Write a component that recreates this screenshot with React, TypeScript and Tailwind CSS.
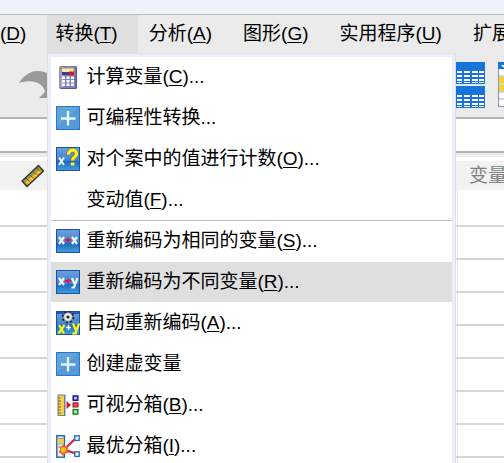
import { useState, type ReactNode } from 'react';

type Item = {
  label: string;
  mnemonic?: string;
  dots?: boolean;
  icon?: ReactNode;
};

function CalculatorIcon() {
  return (
    <svg width="24" height="24" viewBox="0 0 24 24">
      <rect x="3.5" y="1" width="17.5" height="23" rx="1.5" fill="#5c5a94" />
      <rect x="3.5" y="1" width="16" height="22" rx="1.5" fill="#8280bb" />
      <rect x="4.5" y="2" width="3" height="20" fill="#aaa8d4" />
      <rect x="5.5" y="3" width="12.5" height="5" fill="#fae9b4" stroke="#b98a3c" strokeWidth="0.8" />
      <rect x="6" y="7" width="7" height="3" fill="#3b3a8c" />
      <rect x="13" y="6.5" width="5" height="4" fill="#c81f2c" />
      <g fill="#fff">
        <rect x="6" y="11.5" width="3" height="2.5" />
        <rect x="10.5" y="11.5" width="3" height="2.5" />
        <rect x="15" y="11.5" width="3" height="2.5" />
        <rect x="6" y="15" width="3" height="2.5" />
        <rect x="10.5" y="15" width="3" height="2.5" />
        <rect x="15" y="15" width="3" height="2.5" />
        <rect x="6" y="18.5" width="3" height="2.5" />
        <rect x="10.5" y="18.5" width="3" height="2.5" />
        <rect x="15" y="18.5" width="3" height="2.5" />
      </g>
    </svg>
  );
}

function PlusIcon() {
  return (
    <svg width="24" height="24" viewBox="0 0 24 24">
      <rect x="0.5" y="0.5" width="23" height="23" fill="#559ad6" stroke="#2a78c8" />
      <path d="M1 1H23L1 20Z" fill="#6fabde" opacity="0.5" />
      <path d="M12 5V19.5M5 12.5H19.5" stroke="#e4f7ff" strokeWidth="2.4" />
    </svg>
  );
}

function BlueTile({ children }: { children: ReactNode }) {
  return (
    <svg width="24" height="24" viewBox="0 0 24 24">
      <defs>
        <linearGradient id="tile" x1="0" y1="0" x2="0" y2="1">
          <stop offset="0" stopColor="#6aa0dc" />
          <stop offset="0.55" stopColor="#4386cf" />
          <stop offset="0.6" stopColor="#1f68bd" />
          <stop offset="1" stopColor="#3fa0dd" />
        </linearGradient>
      </defs>
      <rect x="0.5" y="0.5" width="23" height="23" fill="url(#tile)" stroke="#1b51a8" />
      {children}
    </svg>
  );
}

function CountIcon() {
  return (
    <BlueTile>
      <path d="M3 10.5L8 18M8 10.5L3 18" stroke="#e9f2fa" strokeWidth="2" />
      <path d="M12.5 7.5C12.5 1.5 21 2 20.5 7C20.3 10 16.5 10 16.5 13.5" stroke="#7c7a10" strokeWidth="4.4" fill="none" />
      <path d="M12.5 7.5C12.5 1.5 21 2 20.5 7C20.3 10 16.5 10 16.5 13.5" stroke="#fff22c" strokeWidth="3.2" fill="none" />
      <rect x="14.8" y="15.5" width="3.6" height="3" fill="#fff22c" />
    </BlueTile>
  );
}

function RecodeSameIcon() {
  return (
    <BlueTile>
      <path d="M3 8L8 15M8 8L3 15M16 8L21 15M21 8L16 15" stroke="#f0f6fb" strokeWidth="2.2" />
      <path d="M9 11H14" stroke="#d81e3a" strokeWidth="2" />
      <path d="M11.5 8L15.5 11L11.5 14Z" fill="#d81e3a" />
    </BlueTile>
  );
}

function RecodeDifferentIcon() {
  return (
    <BlueTile>
      <path d="M3 8L8 15M8 8L3 15M16 8L18.5 14M21.5 8L18 17.5H15.5" stroke="#f0f6fb" strokeWidth="2.2" fill="none" />
      <path d="M9 11H14" stroke="#d81e3a" strokeWidth="2" />
      <path d="M11.5 8L15.5 11L11.5 14Z" fill="#d81e3a" />
    </BlueTile>
  );
}

function AutoRecodeIcon() {
  return (
    <BlueTile>
      <rect x="1" y="1" width="22" height="2" fill="#2458b4" />
      <circle cx="12" cy="6" r="5" fill="none" stroke="#222" strokeWidth="2.4" strokeDasharray="2 1.9" />
      <circle cx="12" cy="6" r="4.2" fill="#ececec" stroke="#999" strokeWidth="0.8" />
      <circle cx="12" cy="6" r="1.6" fill="#222" />
      <path d="M3 14L8 22.5M8.5 14L2.5 22.5" stroke="#f6f51c" strokeWidth="2.4" />
      <path d="M17 12.5L19.8 19M23 12.5L19.5 22.5H16.5" stroke="#f6f51c" strokeWidth="2.4" fill="none" />
      <path d="M10 16.5H15M12.5 14V19" stroke="#fff" strokeWidth="1.6" />
    </BlueTile>
  );
}

function VisualBinIcon() {
  return (
    <svg width="24" height="24" viewBox="0 0 24 24">
      <rect x="1.5" y="1.5" width="8" height="21.5" fill="#6f7c9c" />
      <rect x="2.5" y="2.5" width="5.5" height="19.5" fill="#f4cf4c" />
      <path d="M2 5H4.5M2 8H5M2 11H4.5M2 14H5M2 17H4.5M2 20H5" stroke="#6c6433" />
      <path d="M10.5 8L15 12L10.5 16Z" fill="#bd2335" />
      <rect x="17.2" y="3" width="4.6" height="4.2" fill="#b9c1e8" stroke="#16189a" strokeWidth="1.5" />
      <rect x="17.2" y="10" width="4.6" height="3.8" fill="#df5865" stroke="#c51f2f" strokeWidth="1.5" />
      <rect x="17.2" y="16.6" width="4.6" height="4.4" fill="#bfe6bf" stroke="#138a1c" strokeWidth="1.5" />
    </svg>
  );
}

function OptimalBinIcon() {
  return (
    <svg width="24" height="24" viewBox="0 0 24 24">
      <rect x="0.8" y="1.8" width="7.6" height="21.4" fill="#e8f1fa" stroke="#235f9e" strokeWidth="1.4" />
      <rect x="1.5" y="5" width="6.2" height="4.5" fill="#f5cf3d" />
      <path d="M1.5 4.5H8M1.5 10H8M1.5 13H8" stroke="#8a9dae" />
      <path d="M19 5L8 15.5L19.5 19.5" stroke="#dc1f4a" strokeWidth="2.2" fill="none" />
      <rect x="18.8" y="1.8" width="4.4" height="4.6" fill="#fff" stroke="#2d73b2" strokeWidth="1.4" />
      <rect x="18.8" y="17.8" width="4.4" height="4.6" fill="#fff" stroke="#2d73b2" strokeWidth="1.4" />
      <path d="M7 10L9 12.5L12 12.5L11.5 16L12.5 19L9 19.5L7 22L5 19.5L2.5 18.5L4 15.5L3.5 12.5L6 12.5Z" fill="#f3671c" />
      <circle cx="7.4" cy="15.8" r="2.6" fill="#ffc21f" />
    </svg>
  );
}

function RedoIcon() {
  return (
    <svg width="34" height="30" viewBox="0 0 34 30" className="shrink-0">
      <path d="M0 13C6 4 12 1 19 1C23 1 26 2 30 4V28H20L26 22C24 12 13 9 0 13Z" fill="#999" />
    </svg>
  );
}

function SplitTablesIcon() {
  return (
    <svg width="37" height="48" viewBox="0 0 37 48" className="shrink-0">
      {[1, 25].map(y => (
        <g key={y}>
          <rect x="0" y={y} width="37" height="22" fill="#1874d8" />
          <g fill="#fff">
            {[9, 13, 17, 20].map((dy, i) => (
              <g key={dy}>
                <rect x="2" y={y + dy} width="6" height={i === 3 ? 1 : 2} />
                <rect x="9" y={y + dy} width="5" height={i === 3 ? 1 : 2} />
                <rect x="16" y={y + dy} width="6" height={i === 3 ? 1 : 2} />
                <rect x="24" y={y + dy} width="6" height={i === 3 ? 1 : 2} />
                <rect x="31" y={y + dy} width="5" height={i === 3 ? 1 : 2} />
              </g>
            ))}
          </g>
        </g>
      ))}
      <path d="M0 24H37" stroke="#d4effa" strokeWidth="2" />
    </svg>
  );
}

function SelectCasesIcon() {
  return (
    <svg width="30" height="48" viewBox="0 0 30 48" className="shrink-0">
      <rect x="0.5" y="1.5" width="29" height="44" fill="#fff" stroke="#8d97ad" />
      <rect x="0" y="1" width="30" height="7" fill="#1874d8" />
      <path d="M3 4H8L5.5 6.5Z" fill="#fff" />
      <rect x="1" y="16" width="29" height="6" fill="#f5d52c" />
      <rect x="1" y="24" width="29" height="6" fill="#f5d52c" />
      <path d="M1 15H30M1 23H30M1 31H30M1 38H30" stroke="#a3a9b8" />
    </svg>
  );
}

function RulerIcon() {
  return (
    <svg width="24" height="24" viewBox="0 0 24 24">
      <path d="M1 17L17.5 1.5L22.5 7L6 22.5Z" fill="#9a9560" stroke="#35352a" strokeWidth="1.4" />
      <path d="M4.5 18.5L18.5 5.5L20.5 7.5L6.5 20.5Z" fill="#f7b90e" />
      <path d="M5 14L8.5 17.5M8.5 10.5L12 14M12 7.5L15.5 11M15.5 4L19 7.5" stroke="#5a5535" />
      <path d="M6 17.5L8 19.5M10 14L12 16M13.5 10.5L15.5 12.5M17 7L19 9" stroke="#ffe36a" />
    </svg>
  );
}

const menus: Item[] = [
  { label: '转换', mnemonic: 'T' },
  { label: '分析', mnemonic: 'A' },
  { label: '图形', mnemonic: 'G' },
  { label: '实用程序', mnemonic: 'U' },
  { label: '扩展' },
];

const topItems: Item[] = [
  { label: '计算变量', mnemonic: 'C', dots: true, icon: <CalculatorIcon /> },
  { label: '可编程性转换', dots: true, icon: <PlusIcon /> },
  { label: '对个案中的值进行计数', mnemonic: 'O', dots: true, icon: <CountIcon /> },
  { label: '变动值', mnemonic: 'F', dots: true },
];

const bottomItems: Item[] = [
  { label: '重新编码为相同的变量', mnemonic: 'S', dots: true, icon: <RecodeSameIcon /> },
  { label: '重新编码为不同变量', mnemonic: 'R', dots: true, icon: <RecodeDifferentIcon /> },
  { label: '自动重新编码', mnemonic: 'A', dots: true, icon: <AutoRecodeIcon /> },
  { label: '创建虚变量', icon: <PlusIcon /> },
  { label: '可视分箱', mnemonic: 'B', dots: true, icon: <VisualBinIcon /> },
  { label: '最优分箱', mnemonic: 'I', dots: true, icon: <OptimalBinIcon /> },
];

function Label({ item }: { item: Item }) {
  return (
    <span className="whitespace-nowrap">
      {item.label}
      {item.mnemonic && <>(<u className="underline-offset-2">{item.mnemonic}</u>)</>}
      {item.dots && '...'}
    </span>
  );
}

export default function App() {
  const [active, setActive] = useState('重新编码为不同变量');

  const renderItem = (item: Item) => (
    <button
      key={item.label}
      role="menuitem"
      onMouseEnter={() => setActive(item.label)}
      className={`flex h-10 w-full items-center gap-1.5 pl-[5px] text-left ${active === item.label ? 'bg-[#dfdfdf]' : ''}`}
    >
      <span className="h-6 w-6 shrink-0">{item.icon}</span>
      <Label item={item} />
    </button>
  );

  return (
    <div className="flex h-screen flex-col overflow-hidden bg-white font-['Liberation_Sans','Noto_Sans_CJK_SC',sans-serif] text-[19px] leading-6 text-black">
      <div className="h-3.5 shrink-0 bg-[#edf3fa]" />

      {/* Menu bar */}
      <nav className="flex h-[39px] shrink-0 gap-[3px] border-t border-[#bdbdbd] bg-[#ebebeb]">
        <button className="pr-[18px]">
          (<u className="underline-offset-2">D</u>)
        </button>
        {menus.map((menu, i) => (
          <div key={menu.label} className="relative shrink-0">
            <button className={`h-full pr-5 pl-2 ${i === 0 ? 'bg-[#dfdfdf]' : ''}`}>
              <Label item={menu} />
            </button>
            {i === 0 && (
              <div role="menu" className="absolute top-full left-0 z-10 w-[409px] border border-[#e0e0e6] bg-[#ebeefb] p-[3px]">
                <div className="bg-white pb-2">
                  <div className="flex flex-col gap-px">{topItems.map(renderItem)}</div>
                  <hr className="border-[#c4c4c4]" />
                  <div className="flex flex-col gap-px">{bottomItems.map(renderItem)}</div>
                </div>
              </div>
            )}
          </div>
        ))}
      </nav>

      {/* Toolbar */}
      <div className="flex h-16 shrink-0 items-center justify-between bg-[#ebebeb] pl-[19px]">
        <RedoIcon />
        <div className="-mr-6 flex gap-[13px]">
          <SplitTablesIcon />
          <SelectCasesIcon />
        </div>
      </div>

      {/* Cell editor */}
      <input
        aria-label="单元格"
        className="h-9 w-full shrink-0 border-y-2 border-[#b4b4b4] bg-white outline-none"
      />
      <div className="h-1 shrink-0 bg-[#ebebeb]" />

      <table className="mt-1 w-full shrink-0 table-fixed border-collapse">
        <thead>
          <tr className="h-[29px] bg-[#f2f2f2] text-[#808080]">
            <th className="w-[47px] p-0 pl-[21px]">
              <RulerIcon />
            </th>
            <th className="w-[410px] p-0" />
            <th className="overflow-hidden p-0 pl-3 text-left font-normal whitespace-nowrap">变量</th>
          </tr>
        </thead>
        <tbody>
          {Array.from({ length: 9 }, (_, i) => (
            <tr key={i} className={`border-b-2 border-[#d6d6d6] ${i === 0 ? 'h-9' : 'h-[33px]'}`}>
              <td className="border-r border-r-[#e4e4e4]" />
              <td className="border-r border-r-[#e4e4e4]" />
              <td />
            </tr>
          ))}
        </tbody>
      </table>
    </div>
  );
}
